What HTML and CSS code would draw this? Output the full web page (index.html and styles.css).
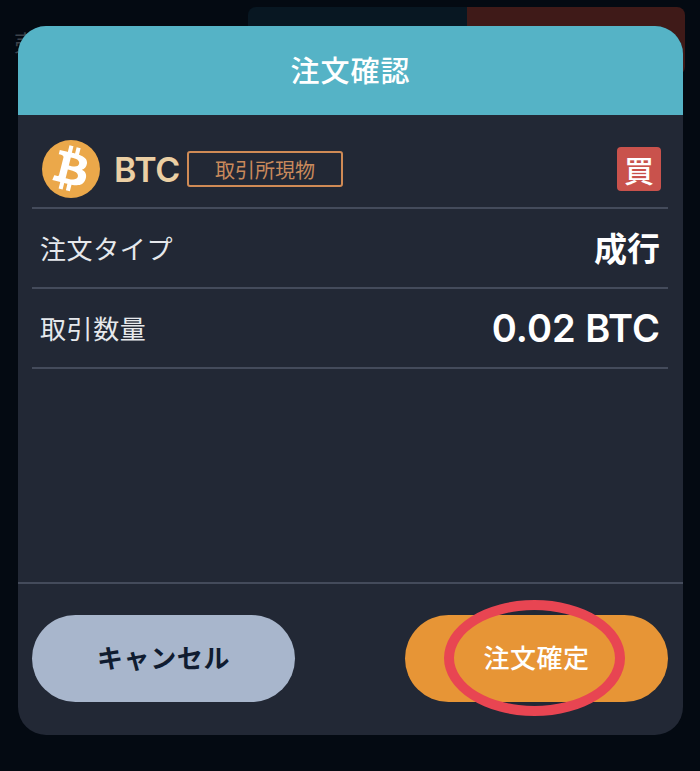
FILE: index.html
```html
<!DOCTYPE html>
<html lang="ja">
<head>
    <meta charset="UTF-8">
    <meta name="viewport" content="width=device-width, initial-scale=1.0">
    <title>注文確認</title>
    <link rel="stylesheet" href="styles.css">
</head>
<body>
    <div class="backdrop">
        <span class="backdrop-text">売</span>
        <div class="backdrop-tabs">
            <div class="tab-dark"></div>
            <div class="tab-red"></div>
        </div>
    </div>

    <div class="modal">
        <div class="modal-title">注文確認</div>

        <div class="modal-body">
            <div class="row row-coin">
                <svg class="coin-icon" viewBox="0 0 24 24" aria-hidden="true">
                    <circle cx="12" cy="12" r="12" fill="#eba84a"/>
                    <path transform="translate(12 12) scale(1.25) translate(-12 -12)" fill="#fff" fill-rule="evenodd" d="M17.288 10.291c.24-1.59-.974-2.45-2.64-3.03l.54-2.153-1.315-.33-.525 2.107c-.345-.087-.705-.167-1.064-.25l.526-2.127-1.32-.33-.54 2.165c-.285-.067-.565-.132-.84-.2l-1.815-.45-.35 1.407s.975.225.955.236c.535.136.63.486.615.766l-1.477 5.92c-.075.166-.24.406-.614.314.015.02-.96-.24-.96-.24l-.66 1.51 1.71.426.93.242-.54 2.19 1.32.327.54-2.17c.36.1.705.19 1.05.273l-.51 2.154 1.32.33.545-2.19c2.24.427 3.93.257 4.64-1.774.57-1.637-.03-2.58-1.217-3.196.854-.193 1.5-.76 1.68-1.93h.01zm-3.01 4.22c-.404 1.64-3.157.75-4.05.53l.72-2.9c.896.23 3.757.67 3.33 2.37zm.41-4.24c-.37 1.49-2.662.735-3.405.55l.654-2.64c.744.18 3.137.52 2.75 2.09z"/>
                </svg>
                <span class="coin-name">BTC</span>
                <span class="coin-tag">取引所現物</span>
                <span class="buy-badge">買</span>
            </div>
            <div class="row row-info">
                <span class="info-label">注文タイプ</span>
                <span class="info-value">成行</span>
            </div>
            <div class="row row-info">
                <span class="info-label">取引数量</span>
                <span class="info-value info-num">0.02 BTC</span>
            </div>
        </div>

        <div class="modal-footer">
            <button class="btn btn-cancel">キャンセル</button>
            <button class="btn btn-confirm">
                注文確定
                <span class="mark-circle"></span>
            </button>
        </div>
    </div>
</body>
</html>
```
FILE: styles.css
```css
* {
    box-sizing: border-box;
}

body {
    margin: 0;
    width: 700px;
    height: 771px;
    overflow: hidden;
    position: relative;
    background: #040a12;
    font-family: "Inter", "Noto Sans CJK JP", sans-serif;
    color: #fff;
}

/* 後ろの画面 */
.backdrop {
    display: flex;
    justify-content: space-between;
    padding: 7px 15px 0 14px;
}

.backdrop-text {
    margin-top: 22px;
    font-size: 22px;
    line-height: 24px;
    color: #3c424a;
    font-family: "Noto Sans CJK JP", sans-serif;
}

.backdrop-tabs {
    display: flex;
    width: 437px;
    height: 68px;
}

.tab-dark {
    flex: 1;
    background: #081722;
    border-top-left-radius: 8px;
}

.tab-red {
    flex: 1;
    background: #3f1a18;
    border-radius: 0 8px 8px 0;
}

/* モーダル */
.modal {
    position: absolute;
    top: 26px;
    left: 18px;
    width: 665px;
    height: 709px;
    display: flex;
    flex-direction: column;
    background: #222835;
    border-radius: 28px;
    overflow: hidden;
}

.modal-title {
    height: 89px;
    padding-bottom: 4px;
    display: flex;
    align-items: center;
    justify-content: center;
    background: #55b3c6;
    font-size: 29px;
    font-weight: 500;
    letter-spacing: 1px;
    font-family: "Noto Sans CJK JP", sans-serif;
}

.modal-body {
    flex: 1;
    padding: 0 15px 0 14px;
    border-bottom: 2px solid #444b5b;
}

.row {
    display: flex;
    align-items: center;
    border-bottom: 2px solid #444b5b;
}

.row-coin {
    height: 94px;
    padding: 16px 7px 0 10px;
}

.coin-icon {
    width: 58px;
    height: 58px;
}

.coin-name {
    margin-left: 14px;
    font-size: 34px;
    font-weight: 600;
    letter-spacing: -0.3px;
    color: #ebcfa4;
}

.coin-tag {
    margin-left: 7px;
    width: 156px;
    height: 36px;
    display: flex;
    align-items: center;
    justify-content: center;
    border: 2px solid #cf8a55;
    border-radius: 3px;
    font-size: 20px;
    color: #c98a5c;
    font-family: "Noto Sans CJK JP", sans-serif;
}

.buy-badge {
    margin-left: auto;
    width: 44px;
    height: 44px;
    display: flex;
    align-items: center;
    justify-content: center;
    background: #c9524c;
    border-radius: 4px;
    font-size: 30px;
    font-weight: 500;
    line-height: 1;
    font-family: "Noto Sans CJK JP", sans-serif;
}

.row-info {
    height: 80px;
    justify-content: space-between;
    padding: 0 8px;
}

.info-label {
    font-size: 26px;
    letter-spacing: 0.6px;
    color: #e6e8ec;
    padding-bottom: 2px;
    font-family: "Noto Sans CJK JP", sans-serif;
}

.info-value {
    font-size: 33px;
    font-weight: 700;
    padding-bottom: 2px;
    font-family: "Noto Sans CJK JP", sans-serif;
}

.info-num {
    font-size: 38px;
    font-weight: 600;
    padding-bottom: 0;
    font-family: "Inter", sans-serif;
}

.modal-footer {
    height: 151px;
    display: flex;
    justify-content: space-between;
    padding: 31px 15px 0 14px;
}

.btn {
    width: 263px;
    height: 87px;
    padding: 0 0 4px;
    border: 0;
    border-radius: 44px;
    font-family: "Noto Sans CJK JP", sans-serif;
    font-size: 26px;
    position: relative;
}

.btn-cancel {
    background: #a8b6cc;
    color: #101c30;
    font-weight: 700;
    letter-spacing: 0.6px;
}

.btn-confirm {
    background: #e79536;
    color: #fff;
    font-weight: 500;
    letter-spacing: 0.5px;
}

/* 赤い丸の書き込み */
.mark-circle {
    position: absolute;
    left: 39px;
    top: -15px;
    width: 181px;
    height: 116px;
    border: 10px solid #e84552;
    border-radius: 50%;
}
```
